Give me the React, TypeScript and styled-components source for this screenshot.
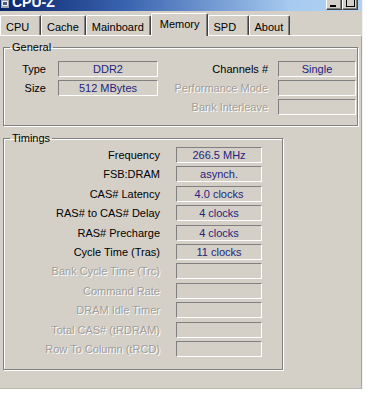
import React from 'react'
import styled, { createGlobalStyle } from 'styled-components'


const FACE = '#d4d0c8'
const SHADOW = '#808080'
const VALUE_COLOR = '#24247c'


const GlobalStyle = createGlobalStyle`
  html, body {
    margin: 0;
    padding: 0;
    background: #fff;
  }
  body {
    font-family: "Liberation Sans", Arial, sans-serif;
    font-size: 11px;
  }
`


interface Field {
  label: string
  value?: string
  disabled?: boolean
}

const TABS = ['CPU', 'Cache', 'Mainboard', 'Memory', 'SPD', 'About']
const ACTIVE_TAB = 'Memory'

const GENERAL_LEFT: Field[] = [
  { label: 'Type', value: 'DDR2' },
  { label: 'Size', value: '512 MBytes' },
]

const GENERAL_RIGHT: Field[] = [
  { label: 'Channels #', value: 'Single' },
  { label: 'Performance Mode', disabled: true },
  { label: 'Bank Interleave', disabled: true },
]

const TIMINGS: Field[] = [
  { label: 'Frequency', value: '266.5 MHz' },
  { label: 'FSB:DRAM', value: 'asynch.' },
  { label: 'CAS# Latency', value: '4.0 clocks' },
  { label: 'RAS# to CAS# Delay', value: '4 clocks' },
  { label: 'RAS# Precharge', value: '4 clocks' },
  { label: 'Cycle Time (Tras)', value: '11 clocks' },
  { label: 'Bank Cycle Time (Trc)', disabled: true },
  { label: 'Command Rate', disabled: true },
  { label: 'DRAM Idle Timer', disabled: true },
  { label: 'Total CAS# (tRDRAM)', disabled: true },
  { label: 'Row To Column (tRCD)', disabled: true },
]


interface FieldListProps {
  fields: Field[]
  labelWidth: number
  gap: number
  boxWidth: number
  rowGap: number
}
const FieldList: React.FC<FieldListProps> = function ({ fields, labelWidth, gap, boxWidth, rowGap }) {
  return (
    <Column $rowGap={rowGap}>
      {fields.map(f =>
        <Row key={f.label} $gap={gap}>
          <Label $width={labelWidth} $disabled={f.disabled}>{f.label}</Label>
          <ValueBox $width={boxWidth}>{f.value}</ValueBox>
        </Row>
      )}
    </Column>
  )
}


const App: React.FC = function () {
  return (
    <>
      <GlobalStyle />
      <Window>
        <TitleBar>
          <AppIcon viewBox="0 0 10 10" aria-hidden>
            <rect x="1" y="0" width="8" height="8" fill="#9fa6b0" />
            <rect x="2" y="1" width="6" height="5" fill="#e8ecf0" />
            <rect x="3" y="2" width="4" height="3" fill="#4a5a78" />
          </AppIcon>
          <Title>CPU-Z</Title>
          <TitleButtons>
            <TitleButton><MinGlyph /></TitleButton>
            <TitleButton><MaxGlyph /></TitleButton>
          </TitleButtons>
        </TitleBar>

        <TabStrip>
          {TABS.map(t =>
            <Tab key={t} $active={t === ACTIVE_TAB}>{t}</Tab>
          )}
        </TabStrip>

        <TabPage>
          <GroupBox>
            <Legend>General</Legend>
            <GeneralBody>
              <FieldList fields={GENERAL_LEFT} labelWidth={42} gap={12} boxWidth={100} rowGap={3} />
              <FieldList fields={GENERAL_RIGHT} labelWidth={110} gap={10} boxWidth={78} rowGap={3} />
            </GeneralBody>
          </GroupBox>

          <TimingsBox>
            <Legend>Timings</Legend>
            <TimingsBody>
              <FieldList fields={TIMINGS} labelWidth={156} gap={16} boxWidth={86} rowGap={3.4} />
            </TimingsBody>
          </TimingsBox>
        </TabPage>
      </Window>
    </>
  )
}


const Window = styled.div`
  width: 363px;
  height: 389px;
  background: ${FACE};
  display: flex;
  flex-flow: column nowrap;
  box-sizing: border-box;
  border-right: 1px solid #f4f2ee;
`

const TitleBar = styled.div`
  height: 11px;
  overflow: hidden;
  display: flex;
  align-items: flex-end;
  background: linear-gradient(to right, #0a246a 0%, #3a64b0 35%, #a6caf0 80%, #b4d2f4 100%);
`

const AppIcon = styled.svg`
  width: 10px;
  height: 10px;
  flex: none;
  margin: 0 2px 1px 0;
`

const Title = styled.span`
  color: #fff;
  font-weight: bold;
  font-size: 14px;
  line-height: 14px;
  margin-bottom: 2px;
  flex: 1;
`

const TitleButtons = styled.div`
  display: flex;
  margin: 0 4px 1px 0;
`

const TitleButton = styled.div`
  width: 16px;
  height: 14px;
  box-sizing: border-box;
  background: ${FACE};
  border: 1px solid;
  border-color: #fff #404040 #404040 #fff;
  box-shadow: inset -1px -1px 0 ${SHADOW};
  position: relative;
`

const MinGlyph = styled.span`
  position: absolute;
  left: 3px;
  bottom: 2px;
  width: 6px;
  height: 2px;
  background: #000;
`

const MaxGlyph = styled.span`
  position: absolute;
  left: 3px;
  bottom: 2px;
  width: 9px;
  height: 9px;
  box-sizing: border-box;
  border: 1px solid #000;
  border-top-width: 2px;
`

const TabStrip = styled.div`
  display: flex;
  align-items: flex-end;
  height: 22px;
  margin-top: 2px;
  position: relative;
  z-index: 1;
`

const Tab = styled.div<{ $active?: boolean }>`
  box-sizing: border-box;
  min-width: 41px;
  height: ${p => p.$active ? 23 : 20}px;
  padding: ${p => p.$active ? '4px 7px 0 8px' : '5px 6px 0 5px'};
  margin-bottom: ${p => p.$active ? -1 : 0}px;
  background: ${FACE};
  color: #000;
  line-height: 13px;
  border-left: 1px solid #fff;
  border-top: 1px solid #fff;
  border-right: 1px solid #404040;
  border-radius: 2px 2px 0 0;
  box-shadow: inset -1px 0 0 ${SHADOW};
  white-space: nowrap;
`

const TabPage = styled.div`
  flex: 1;
  border-top: 1px solid #fff;
  border-right: 1px solid #a8a6a0;
  border-bottom: 1px solid #bdbab2;
  display: flex;
  flex-flow: column nowrap;
  padding: 5px 0 0 3px;
`

const GroupBox = styled.fieldset`
  margin: 0;
  padding: 0 0 10px 0;
  min-width: 0;
  width: 355px;
  box-sizing: border-box;
  border: 1px solid ${SHADOW};
  box-shadow: 1px 1px 0 #fff, inset 1px 1px 0 #fff;
`

const TimingsBox = styled(GroupBox)`
  width: 280px;
  margin-top: 6px;
  padding-bottom: 12px;
`

const Legend = styled.legend`
  margin-left: 6px;
  padding: 0 2px;
  line-height: 13px;
  color: #000;
`

const GeneralBody = styled.div`
  display: flex;
  justify-content: space-between;
  padding: 7px 1px 0 0;
`

const TimingsBody = styled.div`
  padding-top: 2px;
`

const Column = styled.div<{ $rowGap: number }>`
  display: flex;
  flex-flow: column nowrap;
  gap: ${p => p.$rowGap}px;
`

const Row = styled.div<{ $gap: number }>`
  display: flex;
  align-items: center;
  gap: ${p => p.$gap}px;
`

const Label = styled.span<{ $width: number, $disabled?: boolean }>`
  width: ${p => p.$width}px;
  text-align: right;
  white-space: nowrap;
  color: ${p => p.$disabled ? '#a09e98' : '#000'};
  text-shadow: ${p => p.$disabled ? '1px 1px 0 #fff' : 'none'};
`

const ValueBox = styled.div<{ $width: number }>`
  width: ${p => p.$width}px;
  height: 16px;
  box-sizing: border-box;
  border: 1px solid;
  border-color: ${SHADOW} #fff #fff ${SHADOW};
  color: ${VALUE_COLOR};
  text-align: center;
  line-height: 14px;
  white-space: nowrap;
`


export default App
